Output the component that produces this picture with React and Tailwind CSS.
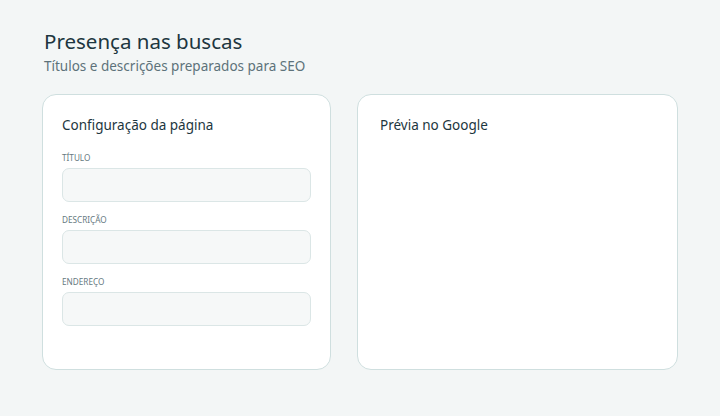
export default function App() {
  const fields = ["Título", "Descrição", "Endereço"];
  return (
    <div className="min-h-[416px] w-[720px] bg-[#f3f6f6] px-[42px] pt-[28px] font-['Noto_Sans',sans-serif]">
      <div className="pl-[2px]">
        <h1 className="text-[20.5px] leading-[26px] text-[#1d3640]">Presença nas buscas</h1>
        <p className="mt-[3px] text-[13.5px] leading-[18px] text-[#5d727a]">Títulos e descrições preparados para SEO</p>
      </div>
      <div className="mt-[19px] grid grid-cols-[289px_1fr] gap-[26px]">
        <div className="h-[276px] rounded-[14px] border border-[#cfdfdf] bg-white px-[19px] pt-[21px]">
          <h2 className="text-[13.5px] leading-[18px] text-[#1d3640]">Configuração da página</h2>
          <div className="mt-[18px] flex flex-col gap-[12px]">
            {fields.map((f) => (
              <div key={f}>
                <div className="text-[8.2px] uppercase leading-[11px] text-[#66797f]">{f}</div>
                <div className="mt-[5px] h-[34px] rounded-[7px] border border-[#dbe6e6] bg-[#f6f8f8]" />
              </div>
            ))}
          </div>
        </div>
        <div className="h-[276px] rounded-[14px] border border-[#cfdfdf] bg-white px-[22px] pt-[21px]">
          <h2 className="text-[13.5px] leading-[18px] text-[#1d3640]">Prévia no Google</h2>
        </div>
      </div>
    </div>
  );
}
